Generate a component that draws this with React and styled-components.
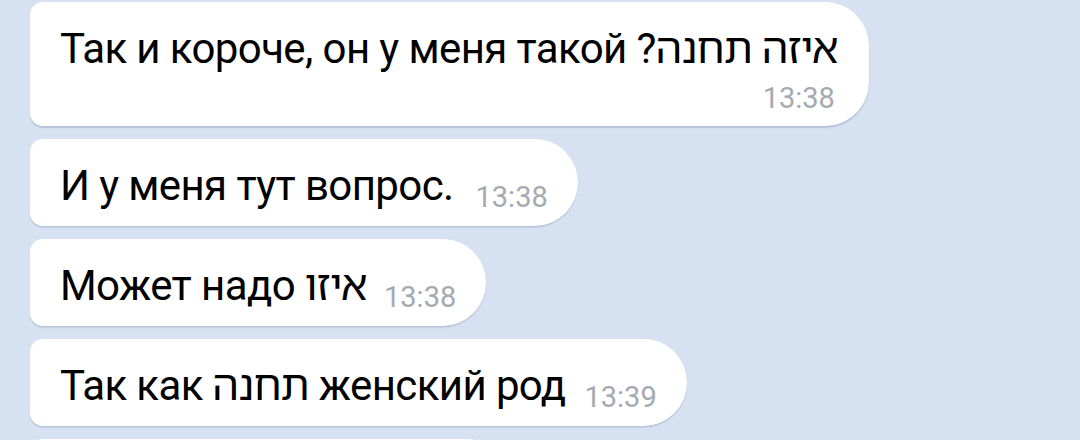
import React from "react";
import styled, { createGlobalStyle } from "styled-components";

const Global = createGlobalStyle`
  html, body {
    margin: 0;
    padding: 0;
    background: #d6e1f1;
    overflow: hidden;
  }
`;

const Chat = styled.div`
  display: flex;
  flex-direction: column;
  align-items: flex-start;
  gap: 13px;
  padding: 2px 0 0 30px;
  height: 440px;
  overflow: hidden;
  box-sizing: border-box;
  font-family: Roboto, "Noto Sans Hebrew", "DejaVu Sans", sans-serif;
`;

const Bubble = styled.div`
  flex: none;
  background: #ffffff;
  border-radius: 13px 44px 44px 13px;
  box-shadow: 0 1.5px 1px rgba(120, 140, 170, 0.35);
  padding: 22px ${(p) => (p.$stacked ? 31 : 30)}px ${(p) => (p.$stacked ? 14 : 15)}px 30px;
  color: #000;
`;

const PeekBubble = styled(Bubble)`
  width: 420px;
  height: 50px;
`;

const Text = styled.span`
  font-size: 42px;
  line-height: 49px;
  letter-spacing: -0.6px;
  white-space: nowrap;
`;

const Line = styled.div`
  font-size: 42px;
  line-height: 49px;
  letter-spacing: -0.6px;
  white-space: nowrap;
`;

const Time = styled.span`
  display: inline-block;
  font-size: 29px;
  line-height: 28px;
  color: #a5aab0;
  margin-left: ${(p) => p.$gap || 17}px;
  vertical-align: -7px;
`;

const StackTime = styled.div`
  font-size: 29px;
  line-height: 28px;
  color: #a5aab0;
  text-align: right;
  margin-top: 11px;
  padding-right: 3px;
`;

export default function App() {
  return (
    <>
      <Global />
      <Chat>
        <Bubble $stacked>
          <Line>Так и короче, он у меня такой ?איזה תחנה</Line>
          <StackTime>13:38</StackTime>
        </Bubble>
        <Bubble>
          <Text>И у меня тут вопрос.</Text>
          <Time $gap={22}>13:38</Time>
        </Bubble>
        <Bubble>
          <Text>Может надо איזו</Text>
          <Time>13:38</Time>
        </Bubble>
        <Bubble>
          <Text>Так как תחנה женский род</Text>
          <Time $gap={19}>13:39</Time>
        </Bubble>
        <PeekBubble />
      </Chat>
    </>
  );
}
